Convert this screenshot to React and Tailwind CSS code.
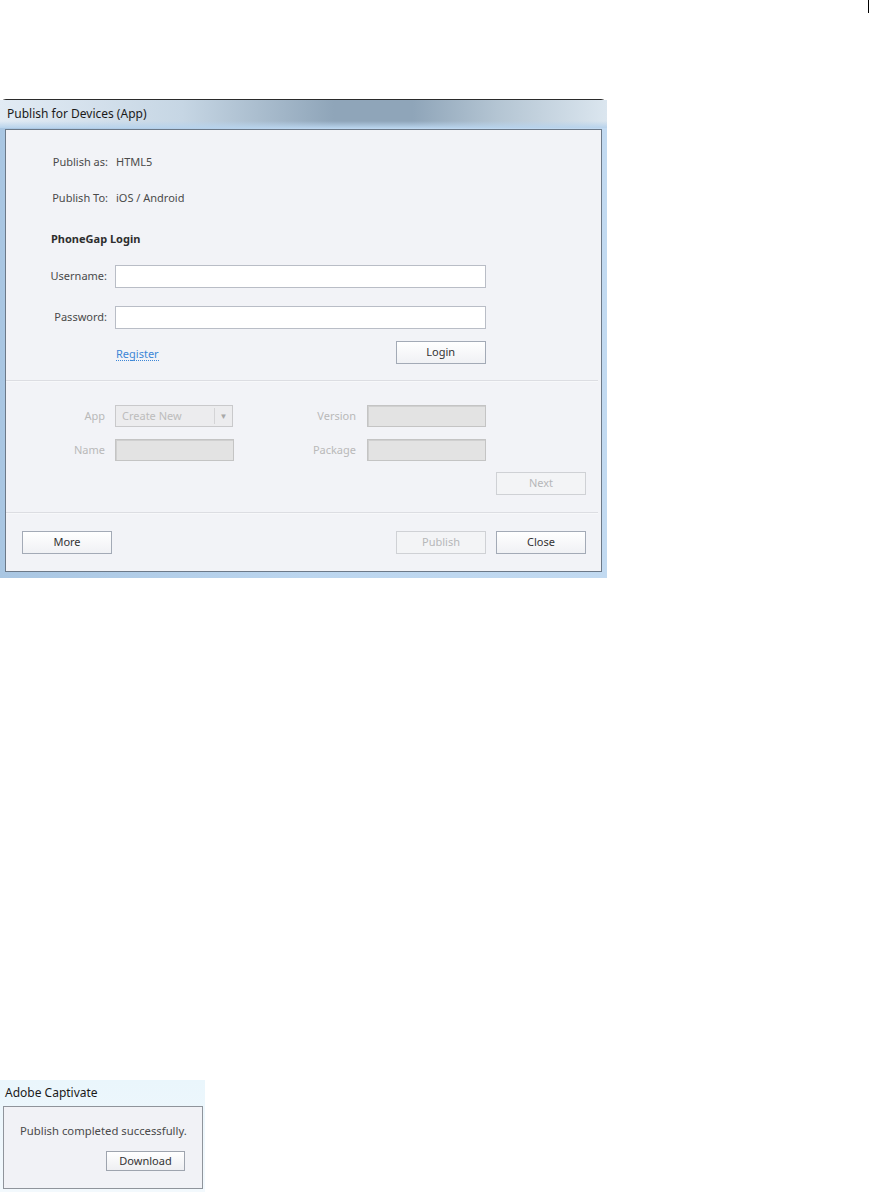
const font = { fontFamily: '"Noto Sans", "Open Sans", Arial, sans-serif' };

function Btn({ children, disabled, className = "" }) {
  return (
    <div
      className={`flex h-[23px] w-[90px] items-center justify-center border text-[11px] ${
        disabled
          ? "border-[#cfd1d5] bg-[#f3f4f6] text-[#b6b7b9]"
          : "border-[#a3aab6] bg-gradient-to-b from-white to-[#f0f1f4] text-[#333]"
      } ${className}`}
    >
      {children}
    </div>
  );
}

function Field({ disabled, className = "" }) {
  return (
    <div
      className={`border ${
        disabled
          ? "h-[22px] border-[#c4c4c4] bg-[#e3e3e3] shadow-[inset_1px_1px_0_#d0d0d0]"
          : "h-[23px] border-[#b9bdc6] bg-white"
      } ${className}`}
    />
  );
}

export default function App() {
  return (
    <div className="min-h-[1192px] w-[869px] bg-white" style={font}>
      {/* stray edge line */}
      <div className="flex h-[13px] justify-end">
        <div className="w-px bg-black" />
      </div>

      {/* main dialog */}
      <div className="mt-[86px] w-[607px] rounded-t-[6px] border-t border-[#2b2b2b] bg-gradient-to-r from-[#a9c6e2] via-[#bcd6ef] to-[#c2daf1]">
        <div className="relative flex h-[28px] items-center bg-[linear-gradient(90deg,#e2ebf4_0%,#c6d6e4_30%,#8fa5b9_55%,#8fa5b9_68%,#b4c5d3_82%,#dbe6ef_100%)] pl-[7px] text-[12px] text-[#1a1a1a]">
          <div className="absolute inset-x-0 bottom-0 h-[7px] bg-gradient-to-b from-transparent to-[#b8d3ec]" />
          <span className="relative">Publish for Devices (App)</span>
        </div>
        <div className="px-[5px] pb-[6px] pt-px">
          <div className="flex h-[443px] flex-col border border-[#6c7988] bg-[#f2f3f7] pt-[25px] text-[11px] text-[#4a4a4a]">
            {/* info rows */}
            <div className="flex h-[14px] items-center">
              <span className="w-[102px] text-right">Publish as:</span>
              <span className="ml-[8px]">HTML5</span>
            </div>
            <div className="mt-[22px] flex h-[14px] items-center">
              <span className="w-[102px] text-right">Publish To:</span>
              <span className="ml-[8px]">iOS / Android</span>
            </div>
            <div className="ml-[45px] mt-[27px] h-[14px] font-bold leading-[14px] text-[#2e2e2e]">
              PhoneGap Login
            </div>

            {/* login form */}
            <div className="mt-[19px] flex items-center">
              <span className="w-[101px] text-right">Username:</span>
              <Field className="ml-[8px] w-[371px]" />
            </div>
            <div className="mt-[18px] flex items-center">
              <span className="w-[101px] text-right">Password:</span>
              <Field className="ml-[8px] w-[371px]" />
            </div>
            <div className="mt-[12px] flex items-center">
              <span className="ml-[110px] mt-[3px] border-b border-dotted border-[#3d86d6] leading-[13px] text-[#3d86d6]">
                Register
              </span>
              <Btn className="ml-[237px]">Login</Btn>
            </div>

            <div className="mr-[3px] mt-[16px] h-[2px] border-t border-[#dcdde2] bg-[#f7f8fa]" />

            {/* app details (disabled) */}
            <div className="mt-[23px] flex items-center text-[#b9b9b9]">
              <span className="w-[99px] text-right">App</span>
              <div className="ml-[10px] flex h-[22px] w-[118px] items-center border border-[#c9c9cb] bg-[#ececee] pl-[6px] text-[#bcbcbc]">
                <span className="flex-1">Create New</span>
                <div className="h-[16px] w-px bg-[#d4d4d6]" />
                <span className="flex w-[17px] justify-center text-[8px] text-[#a8a8a8]">▼</span>
              </div>
              <span className="w-[123px] text-right">Version</span>
              <Field disabled className="ml-[11px] w-[119px]" />
            </div>
            <div className="mt-[12px] flex items-center text-[#b9b9b9]">
              <span className="w-[99px] text-right">Name</span>
              <Field disabled className="ml-[10px] w-[119px]" />
              <span className="w-[122px] text-right">Package</span>
              <Field disabled className="ml-[11px] w-[119px]" />
            </div>
            <div className="mt-[11px] flex">
              <Btn disabled className="ml-[490px]">Next</Btn>
            </div>

            <div className="mr-[3px] mt-[17px] h-[2px] border-t border-[#dcdde2] bg-[#f7f8fa]" />

            {/* footer */}
            <div className="mt-[17px] flex items-center">
              <Btn className="ml-[16px]">More</Btn>
              <Btn disabled className="ml-[284px]">Publish</Btn>
              <Btn className="ml-[10px]">Close</Btn>
            </div>
          </div>
        </div>
      </div>

      {/* small notification dialog */}
      <div className="mt-[502px] w-[205px] bg-gradient-to-b from-[#eaf6fc] to-[#f3f9fd] pb-[4px]">
        <div className="flex h-[26px] items-center pl-[5px] text-[12px] text-[#1a1a1a]">Adobe Captivate</div>
        <div className="ml-[3px] flex h-[83px] w-[200px] flex-col border border-[#8f949b] bg-[#f1f2f6] text-[11.3px] text-[#4a4a4a]">
          <div className="ml-[16px] mt-[17px] leading-[14px]">Publish completed successfully.</div>
          <div className="ml-[102px] mt-[13px] flex h-[20px] w-[79px] items-center justify-center border border-[#9ea4ae] bg-gradient-to-b from-white to-[#eeeff2] text-[11px] text-[#333]">
            Download
          </div>
        </div>
      </div>
    </div>
  );
}
